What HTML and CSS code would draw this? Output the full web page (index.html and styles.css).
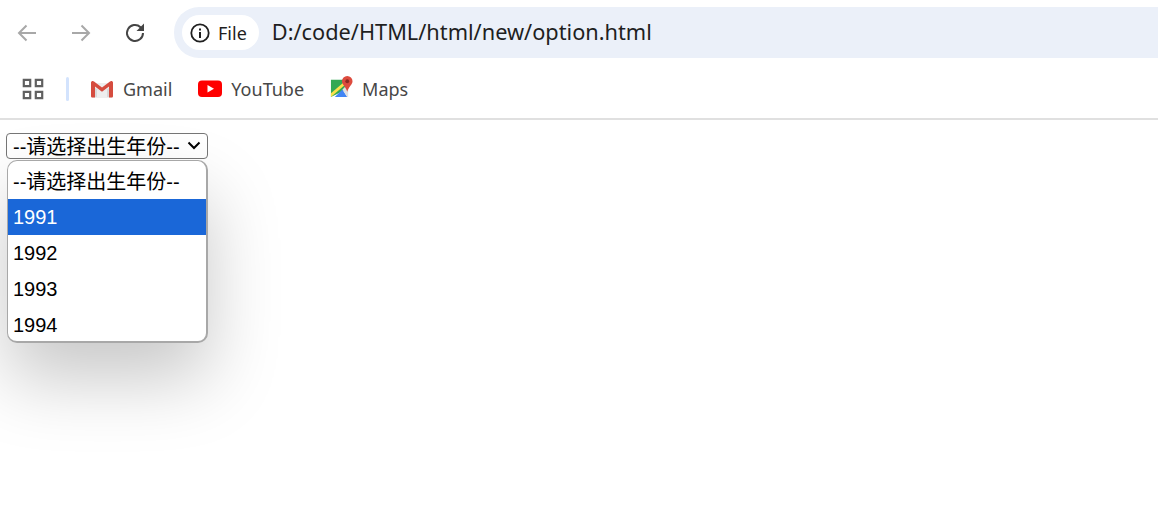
FILE: index.html
```html
<!DOCTYPE html>
<html>
<head>
    <meta charset="UTF-8">
    <title>option.html</title>
    <link rel="stylesheet" href="styles.css">
</head>
<body>
    <header id="browser-bar">
        <div id="nav-row">
            <button class="nav-btn">
                <svg width="24" height="24" viewBox="0 0 24 24"><path class="arrow" d="M21 12H4M11.500 4.500 4 12l7.500 7.500"/></svg>
            </button>
            <button class="nav-btn">
                <svg width="24" height="24" viewBox="0 0 24 24"><path class="arrow" d="M3 12h17M12.500 4.500 20 12l-7.500 7.500"/></svg>
            </button>
            <button class="nav-btn">
                <svg width="24" height="24" viewBox="0 1 24 24"><path class="reload" d="M20 13a8 8 0 1 1-2.500-5.800L20 9.500"/><path class="reload-tip" d="M21 3.500v7.500h-7.500z"/></svg>
            </button>
            <div id="address-bar">
                <div id="site-chip">
                    <svg width="20" height="20" viewBox="0 0 20 20"><circle class="info-ring" cx="10" cy="10" r="8.700"/><path class="info-mark" d="M9 9h2v6H9zM9 5.500h2v2H9z"/></svg>
                    <span>File</span>
                </div>
                <span id="url">D:/code/HTML/html/new/option.html</span>
            </div>
        </div>
        <div id="bookmarks">
            <svg class="apps" width="24" height="24" viewBox="0 0 24 24"><path d="M2.800 2.800h6.400v6.400H2.800zM14.800 2.800h6.400v6.400h-6.400zM2.800 14.800h6.400v6.400H2.800zM14.800 14.800h6.400v6.400h-6.400z"/></svg>
            <div class="divider"></div>
            <a class="bookmark" href="#">
                <svg width="24" height="18" viewBox="0 0 24 18">
                    <path fill="#eeeeee" d="M2 3h20v15H2z"/>
                    <path fill="#d9d9d9" d="M4 17V7l8 6 8-6v10h-3V9l-5 4-5-4v8z"/>
                    <path fill="#d54c3f" d="M1 2.500C1 1 3 .500 4 1.500l8 6 8-6c1-1 3-.5 3 1V16c0 1-.5 1.500-1.500 1.500H19V6.500l-7 5.300-7-5.300v11H2.500C1.500 17.500 1 17 1 16z"/>
                </svg>
                <span>Gmail</span>
            </a>
            <a class="bookmark" href="#">
                <svg width="24" height="18" viewBox="0 0 24 18"><rect fill="#f00" x="0" y="0.500" width="24" height="16.500" rx="4"/><path fill="#fff" d="M9.500 5l6.500 3.700-6.500 3.800z"/></svg>
                <span>YouTube</span>
            </a>
            <a class="bookmark maps" href="#">
                <svg width="23" height="23" viewBox="0 0 24 24">
                    <path fill="#34a853" d="M1 4h16v10L1 22z"/>
                    <path fill="#fbe14b" d="M1 18 15 6l2 2L1 22z"/>
                    <path fill="#4285f4" d="M5 22l8-8 5 8z"/>
                    <path fill="#e0e0e0" d="M13 14l3-3 3 3v8h-1z"/>
                    <path fill="#dd4b3e" d="M18 0a5.500 5.500 0 0 1 5.500 5.500c0 3.500-4 5.500-5.500 11-1.500-5.500-5.500-7.500-5.500-11A5.500 5.500 0 0 1 18 0z"/>
                    <circle fill="#8c2a22" cx="18" cy="5.500" r="2"/>
                </svg>
                <span>Maps</span>
            </a>
        </div>
    </header>

    <main id="page">
        <div id="year-select">
            <span>--请选择出生年份--</span>
            <svg width="14" height="9" viewBox="0 0 14 9"><path class="chevron" d="M1.500 1.500 7 7l5.500-5.500"/></svg>
        </div>
        <ul id="year-list">
            <li>--请选择出生年份--</li>
            <li class="selected">1991</li>
            <li>1992</li>
            <li>1993</li>
            <li>1994</li>
        </ul>
    </main>
</body>
</html>
```

FILE: styles.css
```css
html, body {
    height: 100%;
}

body {
    margin: 0;
    background-color: #fff;
    overflow: hidden;
    font-family: "Noto Sans", "Noto Sans CJK SC", sans-serif;
}

#browser-bar {
    height: 118px;
    border-bottom: 2px solid #e0e0e0;
}

#nav-row {
    display: flex;
    align-items: center;
    height: 64px;
    padding: 1px 0 0 15px;
    box-sizing: border-box;
}

.nav-btn {
    width: 24px;
    height: 24px;
    padding: 0;
    margin-right: 30px;
    border: none;
    background: none;
}

.nav-btn:nth-child(3) {
    margin-right: 27px;
}

.arrow {
    fill: none;
    stroke: #a8a8a8;
    stroke-width: 2;
}

.reload {
    fill: none;
    stroke: #454545;
    stroke-width: 2;
}

.reload-tip {
    fill: #454545;
}

#address-bar {
    flex: 1;
    align-self: flex-start;
    display: flex;
    align-items: center;
    height: 51px;
    margin-top: 6px;
    padding-left: 8px;
    background-color: #ebf0f9;
    border-radius: 25px 0 0 25px;
}

#site-chip {
    display: flex;
    align-items: center;
    gap: 8px;
    height: 35px;
    padding: 0 12px 0 8px;
    background-color: #fff;
    border-radius: 18px;
    font-size: 18px;
    color: #1f1f1f;
}

#url {
    margin: 0 0 2px 13px;
    font-size: 21.750px;
    color: #1f1f1f;
}

.info-ring {
    fill: none;
    stroke: #1f1f1f;
    stroke-width: 1.800;
}

.info-mark {
    fill: #1f1f1f;
}

#bookmarks {
    display: flex;
    align-items: center;
    height: 50px;
    padding-left: 21px;
}

.apps {
    fill: none;
    stroke: #606060;
    stroke-width: 2.200;
}

.divider {
    width: 3px;
    height: 24px;
    margin: 0 21px;
    background-color: #d3e3fd;
    border-radius: 2px;
}

.bookmark {
    display: flex;
    align-items: center;
    gap: 9px;
    margin-right: 26px;
    font-size: 18px;
    color: #474747;
    text-decoration: none;
}

.maps svg {
    margin-top: -3px;
}

#page {
    position: relative;
    padding: 13px 6px;
    font-family: "Liberation Sans", "Noto Sans CJK SC", sans-serif;
    font-size: 20px;
    color: #000;
}

#year-select {
    display: flex;
    align-items: center;
    justify-content: space-between;
    width: 202px;
    height: 26px;
    padding: 0 6px 2px 6px;
    box-sizing: border-box;
    border: 1px solid #767676;
    border-radius: 4px;
}

.chevron {
    fill: none;
    stroke: #000;
    stroke-width: 2;
}

#year-list {
    position: absolute;
    top: 40px;
    left: 7px;
    width: 201px;
    height: 183px;
    margin: 0;
    padding: 2px 0 0;
    box-sizing: border-box;
    overflow: hidden;
    list-style: none;
    background-color: #fff;
    border: 1px solid #a8a8a8;
    border-width: 1px 2px 2px 1px;
    border-radius: 10px;
    box-shadow: 0 36px 72px rgba(0, 0, 0, 0.22);
}

#year-list li {
    height: 36px;
    padding-left: 5px;
    line-height: 36px;
}

#year-list li:first-child {
    line-height: 38px;
}

#year-list .selected {
    background-color: #1a67d8;
    color: #fff;
}
```
